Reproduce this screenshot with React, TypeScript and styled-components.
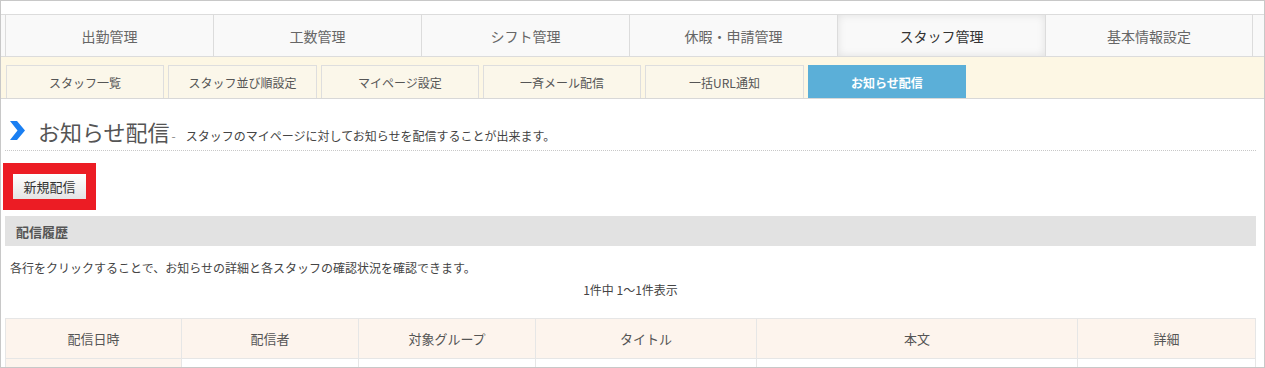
import styled, { createGlobalStyle, css } from 'styled-components';

const GlobalStyle = createGlobalStyle`
    body {
        margin: 0;
        font-family: "Noto Sans CJK JP", "Noto Sans", sans-serif;
        color: #555;
        background: #fff;
    }
`;

const Frame = styled.div`
    box-sizing: border-box;
    width: 1265px;
    height: 368px;
    border: 1px solid #c8c8c8;
    padding-top: 13px;
    overflow: hidden;
`;

const MainNav = styled.ul`
    display: flex;
    margin: 0;
    padding: 0 0 0 4px;
    list-style: none;
    background: #f9f9f9;
    border-top: 1px solid #dcdcdc;
    border-bottom: 1px solid #dcdcdc;
    height: 41px;
`;

const NavItem = styled.li<{ $active?: boolean; $last?: boolean }>`
    box-sizing: border-box;
    width: 208px;
    display: flex;
    align-items: center;
    justify-content: center;
    font-size: 14px;
    color: #666;
    border-left: 1px solid #dcdcdc;
    ${({ $last }) => $last && css`border-right: 1px solid #dcdcdc;`}
    ${({ $active }) =>
        $active &&
        css`
            color: #333;
            box-shadow: inset 0 0 8px rgba(0, 0, 0, 0.1);
        `}
`;

const SubNav = styled.div`
    display: flex;
    gap: 4px;
    padding: 8px 0 0 5px;
    height: 33px;
    background: #fdf7e4;
    border-bottom: 1px solid #d8d8d8;
`;

const SubTab = styled.div<{ $active?: boolean; $w: number }>`
    box-sizing: border-box;
    width: ${({ $w }) => $w}px;
    height: 33px;
    display: flex;
    align-items: center;
    justify-content: center;
    font-size: 12px;
    color: #555;
    background: #fbf7ea;
    border: 1px solid #dedede;
    border-bottom: none;
    ${({ $active }) =>
        $active &&
        css`
            background: #5bafd8;
            border-color: #5bafd8;
            color: #fff;
            font-weight: bold;
        `}
`;

const Content = styled.div`
    padding: 0 8px 0 4px;
`;

const TitleRow = styled.div`
    display: flex;
    align-items: flex-end;
    margin-top: 17px;
    padding: 0 0 4px 5px;
    border-bottom: 1px dotted #c8c8c8;
`;

const Chevron = styled.svg`
    width: 15px;
    height: 19px;
    margin: 0 13px 6px 0;
`;

const Title = styled.h1`
    margin: 0;
    font-size: 22px;
    font-weight: normal;
    color: #555;
    line-height: 30px;
`;

const Lead = styled.span`
    font-size: 12px;
    color: #444;
    margin-left: 2px;
    line-height: 20px;

    &::before {
        content: '-';
        margin-right: 10px;
        color: #888;
    }
`;

const Highlight = styled.div`
    display: inline-block;
    margin: 12px 0 0 -2px;
    padding: 11px 10px;
    background: #ec1c24;
`;

const NewButton = styled.button`
    display: block;
    width: 73px;
    height: 25px;
    padding: 0;
    font-family: inherit;
    font-size: 13px;
    color: #333;
    border: none;
    background: linear-gradient(#ffffff, #e4e4e4);
`;

const SectionHead = styled.h2`
    margin: 6px 0 0;
    height: 30px;
    padding-left: 11px;
    display: flex;
    align-items: center;
    font-size: 13px;
    font-weight: bold;
    color: #555;
    background: #e2e2e2;
`;

const Note = styled.p`
    margin: 12px 0 0 5px;
    font-size: 12px;
    color: #444;
    line-height: 20px;
`;

const Count = styled.p`
    margin: 2px 0 0;
    text-align: center;
    font-size: 12px;
    color: #444;
    line-height: 20px;
`;

const Table = styled.table`
    margin-top: 18px;
    width: 1250px;
    border-collapse: collapse;
    table-layout: fixed;
`;

const Th = styled.th<{ $w?: number }>`
    ${({ $w }) => $w && css`width: ${$w}px;`}
    height: 39px;
    padding: 0;
    font-size: 13px;
    font-weight: normal;
    color: #555;
    background: #fdf4ed;
    border: 1px solid #e6e6e6;
`;

const Td = styled.td`
    height: 30px;
    padding: 0;
    border: 1px solid #e6e6e6;
    background: #fff;
`;

const mainMenu = ['出勤管理', '工数管理', 'シフト管理', '休暇・申請管理', 'スタッフ管理', '基本情報設定'];

const subMenu = [
    { label: 'スタッフ一覧', w: 158 },
    { label: 'スタッフ並び順設定', w: 149 },
    { label: 'マイページ設定', w: 158 },
    { label: '一斉メール配信', w: 158 },
    { label: '一括URL通知', w: 159 },
    { label: 'お知らせ配信', w: 158 },
];

const columns = [
    { label: '配信日時', w: 175 },
    { label: '配信者', w: 176 },
    { label: '対象グループ', w: 176 },
    { label: 'タイトル', w: 220 },
    { label: '本文', w: 320 },
    { label: '詳細', w: 177 },
];

function App() {
    return (
        <>
            <GlobalStyle />
            <Frame>
                <MainNav>
                    {mainMenu.map((name, i) => (
                        <NavItem key={i} $active={i === 4} $last={i === mainMenu.length - 1}>
                            {name}
                        </NavItem>
                    ))}
                </MainNav>
                <SubNav>
                    {subMenu.map((item, i) => (
                        <SubTab key={i} $w={item.w} $active={i === 5}>
                            {item.label}
                        </SubTab>
                    ))}
                </SubNav>
                <Content>
                    <TitleRow>
                        <Chevron viewBox="0 0 15 19">
                            <path d="M0 0 L7 0 L15 9.5 L7 19 L0 19 L7.5 9.5 Z" fill="#1a7ff2" />
                        </Chevron>
                        <Title>お知らせ配信</Title>
                        <Lead>スタッフのマイページに対してお知らせを配信することが出来ます。</Lead>
                    </TitleRow>
                    <Highlight>
                        <NewButton type="button">新規配信</NewButton>
                    </Highlight>
                    <SectionHead>配信履歴</SectionHead>
                    <Note>各行をクリックすることで、お知らせの詳細と各スタッフの確認状況を確認できます。</Note>
                    <Count>1件中 1〜1件表示</Count>
                    <Table>
                        <thead>
                            <tr>
                                {columns.map((col, i) => (
                                    <Th key={i} $w={col.w}>{col.label}</Th>
                                ))}
                            </tr>
                        </thead>
                        <tbody>
                            <tr>
                                <Th as="td" />
                                <Td />
                                <Td />
                                <Td />
                                <Td />
                                <Td />
                            </tr>
                        </tbody>
                    </Table>
                </Content>
            </Frame>
        </>
    );
}

export default App;
